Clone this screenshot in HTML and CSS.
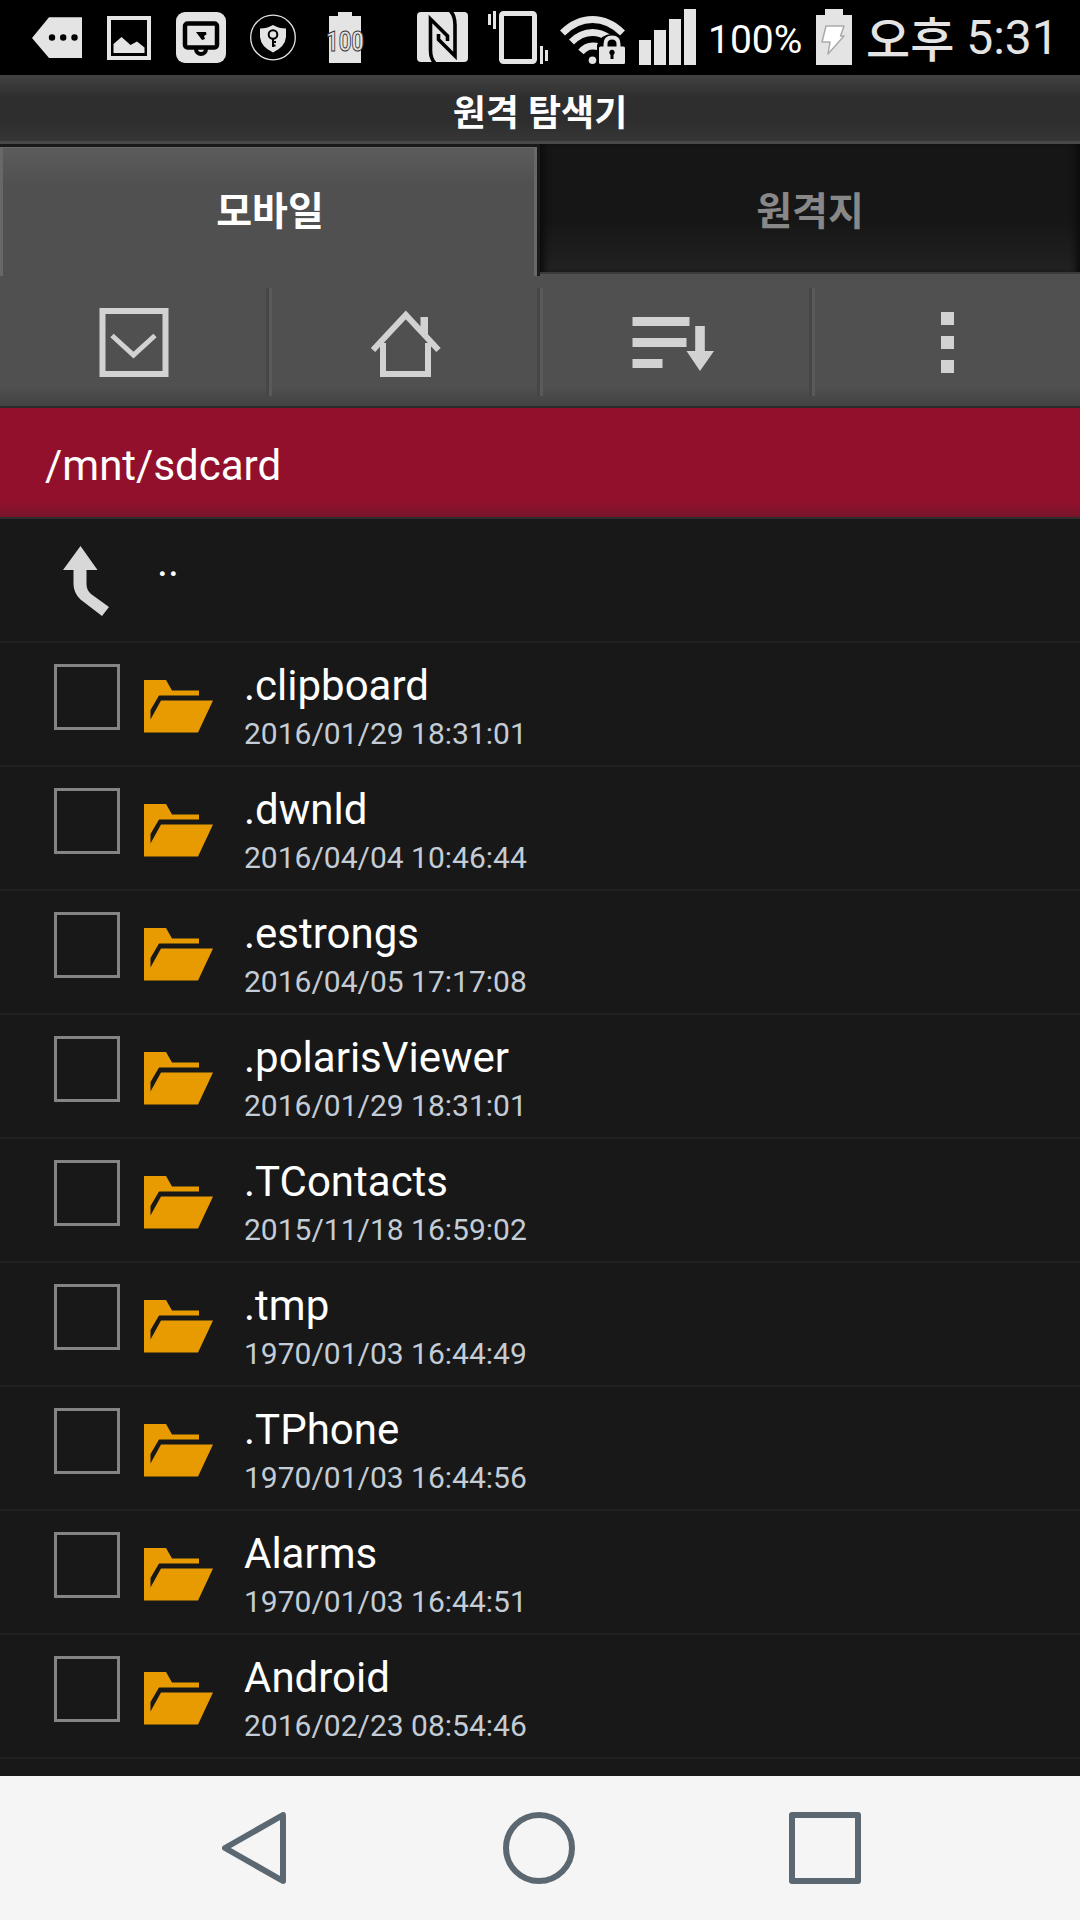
FILE: index.html
```html
<!DOCTYPE html>
<html lang="ko">
<head>
<meta charset="utf-8">
<title>원격 탐색기</title>
<link rel="stylesheet" href="styles.css">
</head>
<body>
<svg class="defs" width="0" height="0" aria-hidden="true">
  <symbol id="folder" viewBox="0 0 69 53">
    <path d="M0 0H22L28 10.500H55V15.500H15L6.500 30V39.500L17 20.500H69L54 52.500H0Z"/>
  </symbol>
</svg>
<div class="screen">
  <header class="status">
    <svg class="icon tag" viewBox="32 0 50 75"><path d="M32 38L49 17.300H82V58H49Z"/><g class="hole"><circle cx="52" cy="37.500" r="3.200"/><circle cx="63.200" cy="37.500" r="3.200"/><circle cx="74.500" cy="37.500" r="3.200"/></g></svg>
    <svg class="icon picture" viewBox="107 0 44 75"><path fill-rule="evenodd" d="M107 16H151V60H107ZM111 20V56H147V20Z"/><path d="M113.500 53V44L121.500 37L130.500 45L137 41.500L144.500 47.500V53Z"/></svg>
    <svg class="icon monitor" viewBox="176 0 50 75"><rect x="176" y="12" width="50" height="51" rx="9"/><circle class="line" cx="201" cy="49" r="5" stroke-width="4"/><rect class="screen-face" x="185" y="23.500" width="32" height="24" rx="2.500" stroke-width="4.500"/><path class="hole" d="M196 32H206L206.500 34.500L204 36L205 39L202 40Z"/></svg>
    <svg class="icon shield" viewBox="250 0 46 75"><circle class="outline" cx="273" cy="37.500" r="22.300" stroke-width="1.300"/><path d="M273 25Q279 28.500 286 28.500V37Q285 47 273 52.500Q261 47 260 37V28.500Q267 28.500 273 25Z"/><circle class="line" cx="273" cy="34.500" r="4.300" stroke-width="2"/><path class="line" d="M273 39V47M273 42H276M273 45.500H275.500" stroke-width="2"/></svg>
    <svg class="icon charge" viewBox="325 0 40 75"><path d="M329 16H338V12H352V16H361V63H329Z"/><text class="charge-text" x="345" y="50.500" text-anchor="middle" textLength="38" lengthAdjust="spacingAndGlyphs">100</text></svg>
    <svg class="icon nfc" viewBox="417 0 51 75"><rect x="417" y="12" width="51" height="50" rx="4"/><path class="line" d="M435 63Q430.500 59 430.500 50V19L447.500 36V41M438.500 34V39.500L455 56V25Q455 16 450.500 11" stroke-width="3.600"/></svg>
    <svg class="icon vibrate" viewBox="488 0 60 75"><rect class="outline" x="501.500" y="13.500" width="33" height="48" rx="2" stroke-width="5"/><path d="M488 14H491V25H488ZM493 11H496V29H493ZM540 46H543V64H540ZM545 50H548V61H545Z"/></svg>
    <svg class="icon wifi" viewBox="560 0 66 75"><g class="outline" stroke-width="7"><path d="M562.500 33Q576 19.500 592.500 19.500Q609 19.500 622.500 33"/><path d="M571.500 42Q581 32.500 592.500 32.500Q601 32.500 609 38"/><path d="M581 52Q586 46 592.500 46Q596 46 600 47"/></g><circle cx="592.500" cy="60.300" r="3.800"/><path class="hole" d="M597 45Q601 34 612 34Q624 34 626 45V66H597Z"/><rect x="599" y="46.500" width="26" height="17.500" rx="1.500"/><path class="outline" d="M605.500 48V44Q605.500 37.500 612 37.500Q618.500 37.500 618.500 44V48" stroke-width="4"/><path class="hole" d="M609.500 53.500A2.700 2.700 0 1 1 614.500 53.500L613.500 55V59H610.500V55Z"/></svg>
    <svg class="icon signal" viewBox="639 0 57 75"><path d="M639 40H651V65H639ZM654 30H666V65H654ZM669 19H681V65H669ZM684 9H696V65H684Z"/></svg>
    <span class="percent">100%</span>
    <svg class="icon battery" viewBox="816 0 36 75"><path d="M816 15H825V9H843V15H852V65H816Z"/><path class="bolt" d="M826 26H844L840.500 36H844L828 54L830 42H822Z"/></svg>
    <span class="clock"><span class="meridiem">오후</span> 5:31</span>
  </header>
  <h1 class="title">원격 탐색기</h1>
  <nav class="tabs">
    <div class="tab active">모바일</div>
    <div class="tab">원격지</div>
  </nav>
  <div class="toolbar">
    <div class="tool"><svg class="tool-icon" viewBox="94.500 303 80 80"><path class="stroke" d="M103 311H166V374H103Z" stroke-width="6"/><path class="stroke" d="M112.500 335.500L134 355L155.500 335.500" stroke-width="5"/></svg></div>
    <div class="tool"><svg class="tool-icon" viewBox="366 303 80 80"><path class="stroke" d="M383 343V374H428V343" stroke-width="6"/><path class="stroke" d="M373 350L405.800 315L438.500 350" stroke-width="6"/><path d="M420.500 317H428V338L420.500 330Z"/></svg></div>
    <div class="tool"><svg class="tool-icon" viewBox="637.500 303 80 80"><path d="M633 317H690V326H633ZM633 338H687V347H633ZM633 359H663V368H633ZM695.700 326H705.300V351H714.500L700.500 371L687 351H695.700Z"/></svg></div>
    <div class="tool"><svg class="tool-icon" viewBox="907 303 80 80"><path d="M941 312H954V325H941ZM941 336H954V349H941ZM941 360H954V373H941Z"/></svg></div>
  </div>
  <div class="path">/mnt/sdcard</div>
  <main class="list">
    <div class="row up"><svg class="up-icon" viewBox="0 0 46 70"><path d="M17.500 0L34.500 24H23.500V38Q23.500 44 28 48L46 61L39 70L17.500 53.500Q10.500 47 10.500 38V24H0Z"/></svg><span class="up-label">..</span></div>
    <div class="row"><span class="check"></span><svg class="folder"><use href="#folder"/></svg><div class="info"><div class="name">.clipboard</div><div class="date">2016/01/29 18:31:01</div></div></div>
    <div class="row"><span class="check"></span><svg class="folder"><use href="#folder"/></svg><div class="info"><div class="name">.dwnld</div><div class="date">2016/04/04 10:46:44</div></div></div>
    <div class="row"><span class="check"></span><svg class="folder"><use href="#folder"/></svg><div class="info"><div class="name">.estrongs</div><div class="date">2016/04/05 17:17:08</div></div></div>
    <div class="row"><span class="check"></span><svg class="folder"><use href="#folder"/></svg><div class="info"><div class="name">.polarisViewer</div><div class="date">2016/01/29 18:31:01</div></div></div>
    <div class="row"><span class="check"></span><svg class="folder"><use href="#folder"/></svg><div class="info"><div class="name">.TContacts</div><div class="date">2015/11/18 16:59:02</div></div></div>
    <div class="row"><span class="check"></span><svg class="folder"><use href="#folder"/></svg><div class="info"><div class="name">.tmp</div><div class="date">1970/01/03 16:44:49</div></div></div>
    <div class="row"><span class="check"></span><svg class="folder"><use href="#folder"/></svg><div class="info"><div class="name">.TPhone</div><div class="date">1970/01/03 16:44:56</div></div></div>
    <div class="row"><span class="check"></span><svg class="folder"><use href="#folder"/></svg><div class="info"><div class="name">Alarms</div><div class="date">1970/01/03 16:44:51</div></div></div>
    <div class="row"><span class="check"></span><svg class="folder"><use href="#folder"/></svg><div class="info"><div class="name">Android</div><div class="date">2016/02/23 08:54:46</div></div></div>
  </main>
  <footer class="navbar">
    <svg class="nav-icon back" viewBox="222 1812 64 72"><path d="M283 1815V1881L225 1848Z"/></svg>
    <svg class="nav-icon home" viewBox="503 1812 72 72"><circle cx="539" cy="1848" r="33"/></svg>
    <svg class="nav-icon recent" viewBox="789 1812 72 72"><path d="M792 1815H858V1881H792Z"/></svg>
  </footer>
</div>
</body>
</html>
```
FILE: styles.css
```css
* { box-sizing: border-box; }
body { margin: 0; background: #000; }
.defs { position: absolute; }
svg { display: block; flex: none; }
.screen {
  width: 1080px; height: 1920px; overflow: hidden;
  display: flex; flex-direction: column;
  background: #181818; color: #fff;
  font-family: Roboto, "Noto Sans CJK KR", sans-serif;
}

.status { height: 75px; flex: none; display: flex; background: #000; }
.icon { height: 75px; fill: #e4e4e4; overflow: visible; }
.icon .hole { fill: #000; }
.icon .line { fill: none; stroke: #000; }
.icon .outline { fill: none; stroke: #e4e4e4; }
.screen-face { stroke: #000; }
.tag { width: 50px; margin-left: 32px; }
.picture { width: 44px; margin-left: 25px; }
.monitor { width: 50px; margin-left: 25px; }
.shield { width: 46px; margin-left: 24px; }
.charge { width: 40px; margin-left: 29px; }
.charge-text { font-size: 28px; font-weight: 700; stroke: #333; stroke-width: 1px; }
.nfc { width: 51px; margin-left: 52px; }
.vibrate { width: 60px; margin-left: 20px; }
.wifi { width: 66px; margin-left: 12px; }
.signal { width: 57px; margin-left: 13px; }
.percent { width: 108px; margin-left: 12px; padding-top: 17px; font-size: 39px; line-height: 46px; white-space: nowrap; }
.battery { width: 36px; }
.bolt { fill: #fff; stroke: #aaa; stroke-width: 1.5px; stroke-linejoin: round; }
.clock { margin-left: 14px; padding-top: 10px; font-size: 48px; line-height: 56px; color: #e4e4e4; white-space: nowrap; }
.meridiem { vertical-align: -3px; line-height: 1; font-weight: 500; }

.title {
  height: 69px; flex: none; margin: 0;
  border-bottom: 3px solid #484848;
  background: linear-gradient(#424242, #2e2e2e 35%, #2e2e2e 70%, #363636);
  font-size: 36px; line-height: 78px; font-weight: 700; text-align: center;
}

.tabs { height: 132px; flex: none; display: flex; background: #505050; }
.tab {
  width: 540px; height: 130px; padding-top: 3px;
  border-bottom: 2px solid #3a3a3a;
  background: linear-gradient(#161616 60%, #222);
  box-shadow: inset 8px 0 6px -4px #0c0c0c, inset -8px 0 6px -4px #0c0c0c;
  color: #888; font-size: 39px; line-height: 131px; font-weight: 700; text-align: center;
}
.tab.active {
  height: 132px; padding: 0 0 0 3px;
  border: solid #1a1a1a; border-width: 3px 3px 0 0;
  background: linear-gradient(#5c5c5c, #505050 30%);
  box-shadow: inset 3px 1px 0 #686868, inset -3px 0 0 #686868;
  color: #fff;
}

.toolbar {
  height: 132px; flex: none; display: flex; padding: 12px 0 10px;
  border-bottom: 2px solid #2a2a2a;
  background: linear-gradient(#505050 85%, #424242);
}
.tool { width: 271.500px; height: 108px; display: flex; padding-top: 15px; justify-content: center; border-right: 3px solid #5a5a5a; box-shadow: inset -3px 0 0 #464646; }
.tool:last-child { width: 265.500px; border: 0; box-shadow: none; }
.tool-icon { width: 80px; height: 80px; fill: #d2d2d2; overflow: visible; }
.tool-icon .stroke { fill: none; stroke: #d2d2d2; }

.path {
  height: 111px; flex: none; padding-left: 45px;
  border-bottom: 2px solid #2e2e2e;
  background: linear-gradient(#92102c 85%, #79152b);
  font-size: 42px; line-height: 116px;
}

.list { height: 1257px; flex: none; }
.row { height: 124px; display: flex; border-bottom: 2px solid #222; }
.up-icon { width: 46px; height: 70px; margin: 27px 0 0 63px; fill: #d8d8d8; }
.up-label { margin: 18px 0 0 48px; font-size: 42px; line-height: 50px; }
.check { width: 66px; height: 66px; flex: none; margin: 21px 0 0 54px; border: 3px solid #848484; }
.folder { width: 69px; height: 53px; margin: 36.500px 0 0 23.500px; fill: #e89b00; }
.info { margin-left: 31.500px; white-space: nowrap; }
.name { padding-top: 18px; font-size: 42px; line-height: 50px; }
.date { font-size: 30px; line-height: 45px; color: #c4ccd6; }

.navbar { height: 144px; flex: none; display: flex; padding-top: 36px; background: #f5f5f5; }
.nav-icon { height: 72px; fill: none; stroke: #5b6871; stroke-width: 6px; stroke-linejoin: round; }
.back { width: 64px; margin-left: 222px; }
.home { width: 72px; margin-left: 217px; }
.recent { width: 72px; margin-left: 214px; }
```
